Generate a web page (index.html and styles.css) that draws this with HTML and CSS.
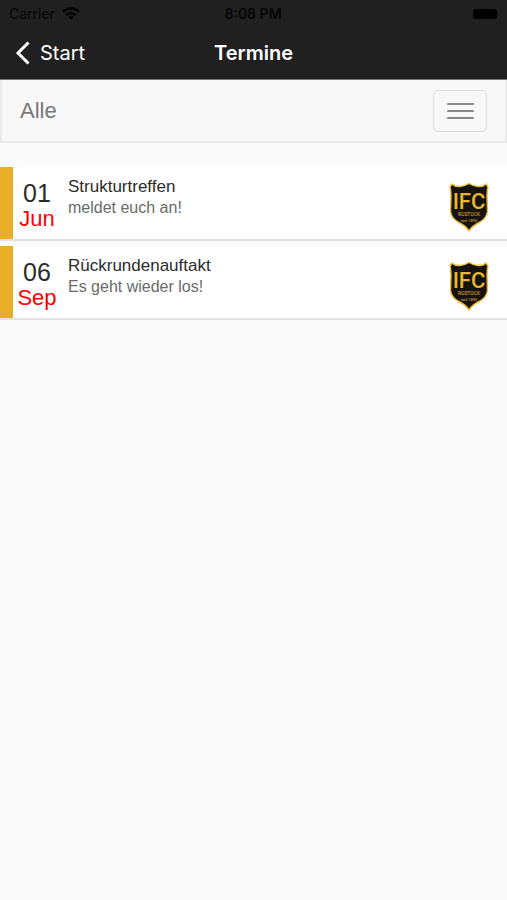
FILE: index.html
```html
<!DOCTYPE html>
<html lang="de">
<head>
<meta charset="utf-8">
<meta name="viewport" content="width=device-width, initial-scale=1">
<title>Termine</title>
<link rel="stylesheet" href="styles.css">
</head>
<body>
<header class="top">
  <div class="status">
    <div class="carrier"><span>Carrier</span><svg width="18" height="13" viewBox="0 0 18 13" aria-hidden="true"><g fill="none" stroke="#060606" stroke-width="2.6"><path d="M1 4.8 Q9 -2 17 4.8"/><path d="M4 8.2 Q9 4 14 8.2"/></g><path d="M6 10 Q9 7.6 12 10 L9 13 Z" fill="#060606"/></svg></div>
    <span class="time">8:08 PM</span>
    <span class="battery"></span>
  </div>
  <nav class="nav">
    <a class="back" href="#"><svg width="16" height="24" viewBox="0 0 16 24" aria-hidden="true"><path d="M13.5 1.5 L3 12 L13.5 22.5" fill="none" stroke="#fff" stroke-width="3"/></svg>Start</a>
    <h1>Termine</h1>
  </nav>
</header>
<div class="filter">
  <span>Alle</span>
  <button class="menu" type="button" aria-label="Menü"><i></i><i></i><i></i></button>
</div>
<main class="events">
  <article class="event">
    <div class="date"><span>01</span><span class="month">Jun</span></div>
    <div class="info"><h2>Strukturtreffen</h2><p>meldet euch an!</p></div>
    <svg class="crest" width="40" height="50" viewBox="0 0 40 50" aria-hidden="true">
      <path d="M3 2 Q6 5 11 4.500 Q16 4 20 1.500 Q24 4 29 4.500 Q34 5 37 2 L39 5 Q38 9 38 14 L38.500 29 Q38 36 31 40 Q23 44 20 49 Q17 44 9 40 Q2 36 1.500 29 L2 14 Q2 9 1 5 Z" fill="#14130f" stroke="#f0bd30" stroke-width="1.4" stroke-linejoin="round"/>
      <text class="crest-name" x="20" y="27">IFC</text>
      <text class="crest-city" x="20" y="34">ROSTOCK</text>
      <text class="crest-year" x="20" y="40">seit 1895</text>
    </svg>
  </article>
  <article class="event">
    <div class="date"><span>06</span><span class="month">Sep</span></div>
    <div class="info"><h2>Rückrundenauftakt</h2><p>Es geht wieder los!</p></div>
    <svg class="crest" width="40" height="50" viewBox="0 0 40 50" aria-hidden="true">
      <path d="M3 2 Q6 5 11 4.500 Q16 4 20 1.500 Q24 4 29 4.500 Q34 5 37 2 L39 5 Q38 9 38 14 L38.500 29 Q38 36 31 40 Q23 44 20 49 Q17 44 9 40 Q2 36 1.500 29 L2 14 Q2 9 1 5 Z" fill="#14130f" stroke="#f0bd30" stroke-width="1.4" stroke-linejoin="round"/>
      <text class="crest-name" x="20" y="27">IFC</text>
      <text class="crest-city" x="20" y="34">ROSTOCK</text>
      <text class="crest-year" x="20" y="40">seit 1895</text>
    </svg>
  </article>
</main>
</body>
</html>
```
FILE: styles.css
```css
* { box-sizing: border-box; }
body {
  margin: 0;
  background: #fafafa;
  color: #2b2b2b;
  font-family: "Liberation Sans", Arial, sans-serif;
}
h1, h2, p { margin: 0; font-weight: 400; }

.top {
  background: #202020;
  border-bottom: 1px solid #747474;
  font-family: Inter, sans-serif;
}
.status {
  display: grid;
  grid-template-columns: 1fr auto 1fr;
  align-items: center;
  height: 27px;
  padding: 0 10px 0 9px;
  color: #060606;
  font-size: 14px;
}
.carrier { display: flex; align-items: center; gap: 7px; }
.time { font-weight: 600; }
.battery {
  justify-self: end;
  width: 24px;
  height: 10px;
  border-radius: 3px;
  background: #000;
}
.nav {
  display: grid;
  grid-template-columns: 1fr auto 1fr;
  align-items: center;
  height: 52px;
  padding: 0 15px;
  color: #fff;
}
.back {
  display: flex;
  align-items: center;
  gap: 9px;
  color: inherit;
  font-size: 20px;
  text-decoration: none;
}
.nav h1 { font-size: 20px; font-weight: 600; }

.filter {
  display: flex;
  align-items: center;
  justify-content: space-between;
  height: 63px;
  padding: 0 18px;
  border: 2px solid #ebebeb;
  border-top: 0;
  background: #f8f8f8;
  color: #777;
  font-size: 22px;
}
.menu {
  display: flex;
  flex-direction: column;
  align-items: center;
  justify-content: center;
  gap: 5px;
  width: 54px;
  height: 42px;
  padding: 0;
  border: 1px solid #dedede;
  border-radius: 5px;
  background: transparent;
}
.menu i {
  width: 27px;
  height: 2px;
  border-radius: 1px;
  background: #888;
}

.events {
  display: flex;
  flex-direction: column;
  gap: 5px;
  padding-top: 24px;
}
.event {
  display: flex;
  align-items: center;
  height: 74px;
  padding-right: 18px;
  border-bottom: 2px solid #e2e2e2;
  background: #fff;
}
.date {
  display: flex;
  flex-direction: column;
  align-self: stretch;
  align-items: center;
  justify-content: center;
  width: 61px;
  padding-top: 5px;
  border-left: 13px solid #e8ae27;
  font-size: 25px;
  line-height: 26px;
}
.month { color: #f00; font-size: 22px; }
.info {
  flex: 1;
  align-self: flex-start;
  padding: 9px 0 0 7px;
  font-size: 16px;
  line-height: 21px;
}
.info h2 { font-size: 17px; }
.info p { color: #6a6a6a; }
.crest { margin-top: 7px; }

.crest-name, .crest-city, .crest-year {
  fill: #e9b62e;
  font-family: Roboto, sans-serif;
  text-anchor: middle;
}
.crest-name { font-size: 22px; font-weight: 500; }
.crest-city { font-size: 5px; }
.crest-year { font-size: 4px; }
```
